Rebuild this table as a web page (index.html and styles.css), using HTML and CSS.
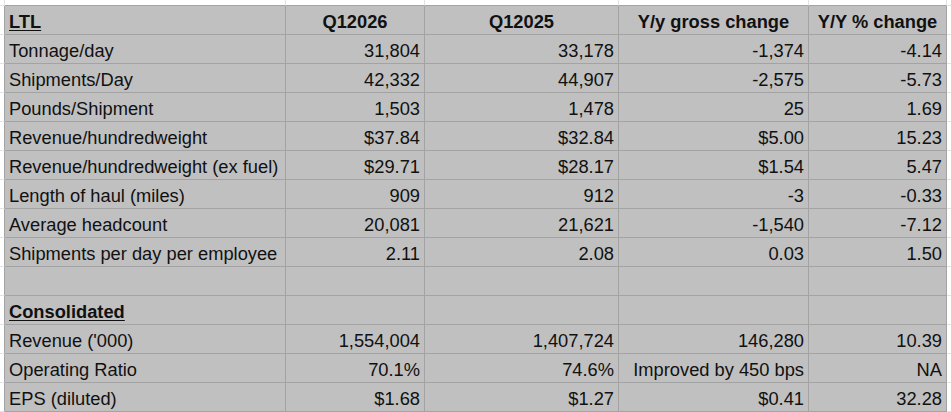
FILE: index.html
```html
<!DOCTYPE html>
<html lang="en">
<head>
<meta charset="utf-8">
<title>LTL results</title>
<link rel="stylesheet" href="styles.css">
</head>
<body>
<div class="sheet">
  <div class="row">
    <div class="pad pad-corner"></div>
    <div class="pad pad-top"></div>
    <div class="pad pad-top"></div>
    <div class="pad pad-top"></div>
    <div class="pad pad-top"></div>
    <div class="pad pad-top"></div>
    <div class="pad pad-corner pad-end"></div>
  </div>
  <div class="row">
    <div class="pad pad-left"></div>
    <div class="cell sec">LTL</div>
    <div class="cell hd">Q12026</div>
    <div class="cell hd">Q12025</div>
    <div class="cell hd">Y/y gross change</div>
    <div class="cell hd">Y/Y % change</div>
    <div class="pad pad-right"></div>
  </div>
  <div class="row">
    <div class="pad pad-left"></div>
    <div class="cell">Tonnage/day</div>
    <div class="cell num">31,804</div>
    <div class="cell num">33,178</div>
    <div class="cell num">-1,374</div>
    <div class="cell num">-4.14</div>
    <div class="pad pad-right"></div>
  </div>
  <div class="row">
    <div class="pad pad-left"></div>
    <div class="cell">Shipments/Day</div>
    <div class="cell num">42,332</div>
    <div class="cell num">44,907</div>
    <div class="cell num">-2,575</div>
    <div class="cell num">-5.73</div>
    <div class="pad pad-right"></div>
  </div>
  <div class="row">
    <div class="pad pad-left"></div>
    <div class="cell">Pounds/Shipment</div>
    <div class="cell num">1,503</div>
    <div class="cell num">1,478</div>
    <div class="cell num">25</div>
    <div class="cell num">1.69</div>
    <div class="pad pad-right"></div>
  </div>
  <div class="row">
    <div class="pad pad-left"></div>
    <div class="cell">Revenue/hundredweight</div>
    <div class="cell num">$37.84</div>
    <div class="cell num">$32.84</div>
    <div class="cell num">$5.00</div>
    <div class="cell num">15.23</div>
    <div class="pad pad-right"></div>
  </div>
  <div class="row">
    <div class="pad pad-left"></div>
    <div class="cell">Revenue/hundredweight (ex fuel)</div>
    <div class="cell num">$29.71</div>
    <div class="cell num">$28.17</div>
    <div class="cell num">$1.54</div>
    <div class="cell num">5.47</div>
    <div class="pad pad-right"></div>
  </div>
  <div class="row">
    <div class="pad pad-left"></div>
    <div class="cell">Length of haul (miles)</div>
    <div class="cell num">909</div>
    <div class="cell num">912</div>
    <div class="cell num">-3</div>
    <div class="cell num">-0.33</div>
    <div class="pad pad-right"></div>
  </div>
  <div class="row">
    <div class="pad pad-left"></div>
    <div class="cell">Average headcount</div>
    <div class="cell num">20,081</div>
    <div class="cell num">21,621</div>
    <div class="cell num">-1,540</div>
    <div class="cell num">-7.12</div>
    <div class="pad pad-right"></div>
  </div>
  <div class="row">
    <div class="pad pad-left"></div>
    <div class="cell">Shipments per day per employee</div>
    <div class="cell num">2.11</div>
    <div class="cell num">2.08</div>
    <div class="cell num">0.03</div>
    <div class="cell num">1.50</div>
    <div class="pad pad-right"></div>
  </div>
  <div class="row">
    <div class="pad pad-left"></div>
    <div class="cell"></div>
    <div class="cell"></div>
    <div class="cell"></div>
    <div class="cell"></div>
    <div class="cell"></div>
    <div class="pad pad-right"></div>
  </div>
  <div class="row">
    <div class="pad pad-left"></div>
    <div class="cell sec">Consolidated</div>
    <div class="cell"></div>
    <div class="cell"></div>
    <div class="cell"></div>
    <div class="cell"></div>
    <div class="pad pad-right"></div>
  </div>
  <div class="row">
    <div class="pad pad-left"></div>
    <div class="cell">Revenue ('000)</div>
    <div class="cell num">1,554,004</div>
    <div class="cell num">1,407,724</div>
    <div class="cell num">146,280</div>
    <div class="cell num">10.39</div>
    <div class="pad pad-right"></div>
  </div>
  <div class="row">
    <div class="pad pad-left"></div>
    <div class="cell">Operating Ratio</div>
    <div class="cell num">70.1%</div>
    <div class="cell num">74.6%</div>
    <div class="cell num">Improved by 450 bps</div>
    <div class="cell num">NA</div>
    <div class="pad pad-right"></div>
  </div>
  <div class="row">
    <div class="pad pad-left"></div>
    <div class="cell">EPS (diluted)</div>
    <div class="cell num">$1.68</div>
    <div class="cell num">$1.27</div>
    <div class="cell num">$0.41</div>
    <div class="cell num">32.28</div>
    <div class="pad pad-right"></div>
  </div>
</div>
</body>
</html>
```

FILE: styles.css
```css
* {
  box-sizing: border-box;
}

html, body {
  margin: 0;
  padding: 0;
  background: #ffffff;
}

body {
  font-family: "Liberation Sans", Arial, sans-serif;
  font-size: 18.3px;
  color: #111111;
  overflow: hidden;
}

.sheet {
  display: grid;
  grid-template-columns: 5px 281px 139px 194px 190px 138px 1fr;
  grid-template-rows: 6px repeat(14, 29px);
  width: 951px;
  height: 412px;
}

.row {
  display: contents;
}

.pad {
  background: #ffffff;
  border-right: 1px solid #e1e2e3;
  border-bottom: 1px solid #e1e2e3;
}

.pad-top {
  border-bottom-color: #a3a3a3;
}

.pad-left {
  border-right-color: #a3a3a3;
}

.pad-right,
.pad-end {
  border-right: 0;
}

.cell {
  background: #c0c0c0;
  border-right: 1px solid #a3a3a3;
  border-bottom: 1px solid #a3a3a3;
  display: flex;
  align-items: flex-end;
  padding: 0 4px 2px 4px;
  line-height: 20px;
  white-space: nowrap;
  overflow: hidden;
}

.num {
  justify-content: flex-end;
}

.hd {
  justify-content: center;
  font-weight: bold;
}

.sec {
  font-weight: bold;
  text-decoration: underline;
  text-underline-offset: 2px;
}
```
